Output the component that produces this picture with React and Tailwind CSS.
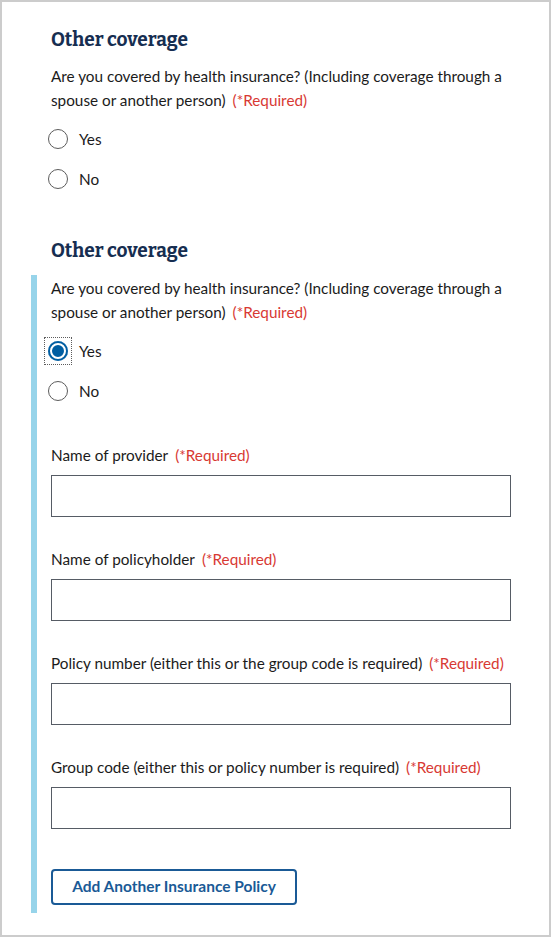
import React from "react";

const body = { fontFamily: '"Source Sans Pro", Lato, "Open Sans", sans-serif' };
const head = { fontFamily: '"Bitter", "DejaVu Serif", serif' };

function Req() {
  return <span className="ml-[7px] text-[#d83933]">(*Required)</span>;
}

function Radio({ label, checked }) {
  return (
    <div className="flex items-center h-6">
      {checked ? (
        <span className="relative ml-[-3px] w-5 h-5 flex items-center justify-center outline-1 outline-dotted outline-[#5c5c5c] outline-offset-[3px]">
          <span className="w-5 h-5 rounded-full bg-[#005ea2] shadow-[inset_0_0_0_2px_#005ea2,inset_0_0_0_4px_#ffffff]" />
        </span>
      ) : (
        <span className="ml-[-3px] w-5 h-5 rounded-full border-[1.5px] border-[#5c5c5c] bg-white" />
      )}
      <span className="ml-[11px] text-[#1b1b1b]">{label}</span>
    </div>
  );
}

function Field({ label, first }) {
  return (
    <div className={first ? "mt-10" : "mt-[30px]"}>
      <div className="h-6 leading-6 text-[#1b1b1b]">
        {label}
        <Req />
      </div>
      <div className="mt-2 h-[42px] w-[460px] border border-[#565c65] bg-white" />
    </div>
  );
}

function Question() {
  return (
    <p className="leading-6 text-[#1b1b1b] w-[460px]">
      Are you covered by health insurance? (Including coverage through a spouse or another person)
      <Req />
    </p>
  );
}

export default function App() {
  return (
    <div className="w-[551px] h-[937px] border-2 border-[#cccccc] bg-white text-[15.3px]" style={body}>
      <div className="pl-[49px] pt-[26px]">
        <h2 className="text-[19px] leading-6 font-bold text-[#162e51]" style={head}>
          Other coverage
        </h2>
        <div className="mt-3">
          <Question />
        </div>
        <div className="mt-[15px] flex flex-col gap-4">
          <Radio label="Yes" />
          <Radio label="No" />
        </div>
        <h2 className="mt-12 text-[19px] leading-6 font-bold text-[#162e51]" style={head}>
          Other coverage
        </h2>
      </div>
      <div className="mt-3 ml-[29px] border-l-[6px] border-[#97d4ea] pl-[14px] pt-px pb-2">
        <Question />
        <div className="mt-[15px] flex flex-col gap-4">
          <Radio label="Yes" checked />
          <Radio label="No" />
        </div>
        <Field label="Name of provider" first />
        <Field label="Name of policyholder" />
        <Field label="Policy number (either this or the group code is required)" />
        <Field label="Group code (either this or policy number is required)" />
        <button className="mt-10 h-9 w-[246px] rounded-[4px] border-2 border-[#1a5a96] bg-white text-[15.5px] font-bold text-[#1a5a96]">
          Add Another Insurance Policy
        </button>
      </div>
    </div>
  );
}
